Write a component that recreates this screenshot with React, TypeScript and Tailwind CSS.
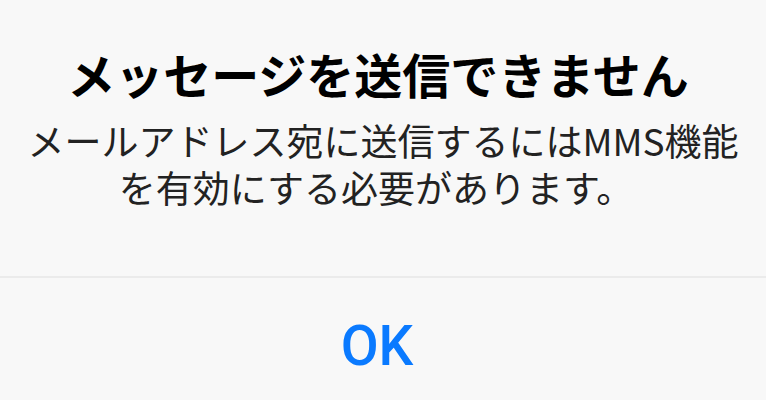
export default function App() {
	return (
		<div className="w-[766px] h-[400px] bg-[#f8f8f8] flex flex-col overflow-hidden font-['Noto_Sans_CJK_JP',sans-serif]">
			<div className="h-[276px] flex flex-col items-center pt-[45px]">
				<h1 className="text-[48px] leading-[56px] font-bold text-black whitespace-nowrap pr-[10px]">
					メッセージを送信できません
				</h1>
				<div className="mt-[16px] flex flex-col items-center text-[37px] leading-[47px] text-[#222] whitespace-nowrap">
					<span>メールアドレス宛に送信するにはMMS機能</span>
					<span className="pr-[14px]">を有効にする必要があります。</span>
				</div>
			</div>
			<div className="h-[2px] bg-[#ebebeb]" />
			<div className="flex-1 flex items-center justify-center pt-[14px] pr-[12px]">
				<button className="font-['Roboto',sans-serif] text-[55px] leading-none font-medium text-[#0a7aff]">
					OK
				</button>
			</div>
		</div>
	);
}
